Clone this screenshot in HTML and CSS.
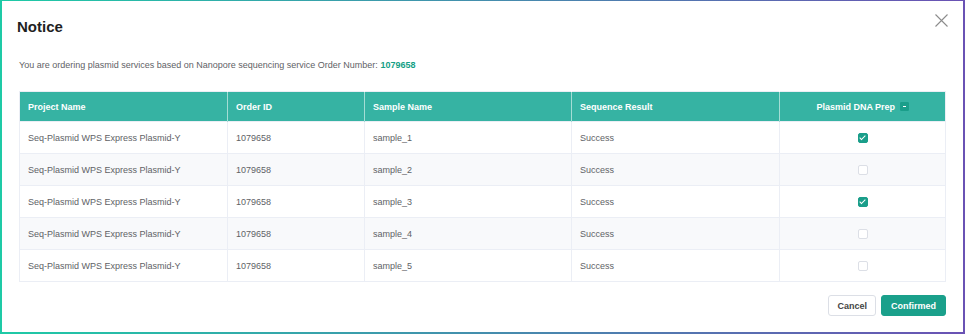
FILE: index.html
```html
<!DOCTYPE html>
<html>

<head>
    <title>Notice</title>
    <meta charset="UTF-8">
    <meta name="viewport" content="width=device-width, initial-scale=1.0">
    <link rel="stylesheet" href="styles.css">
</head>

<body>
    <div class="modal">
        <div class="modal-header">
            <h2 class="modal-title">Notice</h2>
            <button class="close-btn" aria-label="Close">
                <svg width="13" height="13" viewBox="0 0 13 13">
                    <path d="M0.5 0.5 L12.5 12.5 M12.5 0.5 L0.5 12.5" stroke="#8c8c8c" stroke-width="1.1" fill="none" />
                </svg>
            </button>
        </div>

        <div class="modal-body">
            <p class="notice-text">You are ordering plasmid services based on Nanopore sequencing service Order Number: <b class="order-no">1079658</b></p>

            <table class="order-table">
                <colgroup>
                    <col style="width: 208px">
                    <col style="width: 137px">
                    <col style="width: 207px">
                    <col style="width: 208px">
                    <col style="width: 166px">
                </colgroup>
                <thead>
                    <tr>
                        <th>Project Name</th>
                        <th>Order ID</th>
                        <th>Sample Name</th>
                        <th>Sequence Result</th>
                        <th class="center">Plasmid DNA Prep <span class="check indeterminate"></span></th>
                    </tr>
                </thead>
                <tbody>
                    <tr>
                        <td>Seq-Plasmid WPS Express Plasmid-Y</td>
                        <td>1079658</td>
                        <td>sample_1</td>
                        <td>Success</td>
                        <td class="center"><span class="check checked"></span></td>
                    </tr>
                    <tr class="striped">
                        <td>Seq-Plasmid WPS Express Plasmid-Y</td>
                        <td>1079658</td>
                        <td>sample_2</td>
                        <td>Success</td>
                        <td class="center"><span class="check"></span></td>
                    </tr>
                    <tr>
                        <td>Seq-Plasmid WPS Express Plasmid-Y</td>
                        <td>1079658</td>
                        <td>sample_3</td>
                        <td>Success</td>
                        <td class="center"><span class="check checked"></span></td>
                    </tr>
                    <tr class="striped">
                        <td>Seq-Plasmid WPS Express Plasmid-Y</td>
                        <td>1079658</td>
                        <td>sample_4</td>
                        <td>Success</td>
                        <td class="center"><span class="check"></span></td>
                    </tr>
                    <tr>
                        <td>Seq-Plasmid WPS Express Plasmid-Y</td>
                        <td>1079658</td>
                        <td>sample_5</td>
                        <td>Success</td>
                        <td class="center"><span class="check"></span></td>
                    </tr>
                </tbody>
            </table>
        </div>

        <div class="modal-footer">
            <button class="btn btn-cancel">Cancel</button>
            <button class="btn btn-primary">Confirmed</button>
        </div>
    </div>
</body>

</html>
```

FILE: styles.css
```css
html,
body {
    margin: 0;
    height: 100%;
}

body {
    font-family: "Liberation Sans", Arial, sans-serif;
    background: linear-gradient(to right, #1ecaa6, #6a52b4);
    padding: 1px 2px 2px 2px;
    box-sizing: border-box;
}

.modal {
    background-color: #fff;
    height: 100%;
    box-sizing: border-box;
    display: flex;
    flex-direction: column;
}

.modal-header {
    display: flex;
    justify-content: space-between;
    align-items: flex-start;
    padding: 14px 15px 0 15px;
}

.modal-title {
    margin: 3px 0 0 0;
    font-size: 15px;
    line-height: 18px;
    font-weight: bold;
    color: #1f1f1f;
}

.close-btn {
    background: none;
    border: none;
    padding: 0;
    margin-top: -1px;
    cursor: pointer;
}

.modal-body {
    padding: 0 17px;
}

.notice-text {
    margin: 23px 0 0 0;
    font-size: 9px;
    line-height: 12px;
    color: #5f6266;
}

.order-no {
    color: #14a085;
}

.order-table {
    margin-top: 20px;
    width: 926px;
    border-collapse: collapse;
    table-layout: fixed;
    font-size: 9px;
    border: 1px solid #ebeef5;
}

.order-table th {
    background-color: #36b3a3;
    color: #fff;
    font-weight: bold;
    text-align: left;
    height: 30px;
    padding: 0 8px;
    border-left: 1px solid rgba(255, 255, 255, 0.55);
    box-sizing: border-box;
}

.order-table th:first-child {
    border-left: none;
}

.order-table td {
    height: 32px;
    padding: 0 8px;
    color: #606266;
    border: 1px solid #ebeef5;
    box-sizing: border-box;
}

.order-table tr.striped td {
    background-color: #f8f9fb;
}

.order-table .center {
    text-align: center;
}

.check {
    display: inline-block;
    width: 8px;
    height: 8px;
    border: 1px solid #dcdfe6;
    border-radius: 2px;
    background-color: #fff;
    vertical-align: middle;
    position: relative;
}

.check.checked {
    background-color: #1a9e8a;
    border-color: #1a9e8a;
}

.check.checked::after {
    content: "";
    position: absolute;
    left: 2px;
    top: 0px;
    width: 2px;
    height: 5px;
    border: solid #fff;
    border-width: 0 1px 1px 0;
    transform: rotate(45deg);
}

.check.indeterminate {
    width: 7px;
    height: 7px;
    margin-left: 2px;
    margin-top: -2px;
    border-radius: 1px;
    background-color: #1a9e8a;
    border-color: #1a9e8a;
}

.check.indeterminate::after {
    content: "";
    position: absolute;
    left: 2px;
    top: 3px;
    width: 3px;
    height: 1px;
    background-color: #fff;
}

.modal-footer {
    display: flex;
    justify-content: flex-end;
    gap: 5px;
    padding: 13px 17px 0 17px;
}

.btn {
    height: 21px;
    padding: 0 8px;
    font-family: "Liberation Sans", Arial, sans-serif;
    font-size: 9px;
    font-weight: bold;
    border-radius: 3px;
    cursor: pointer;
}

.btn-cancel {
    background-color: #fff;
    border: 1px solid #dcdfe6;
    color: #444;
}

.btn-primary {
    background-color: #1aa08b;
    border: 1px solid #1aa08b;
    color: #fff;
    padding: 0 9px;
}
```
